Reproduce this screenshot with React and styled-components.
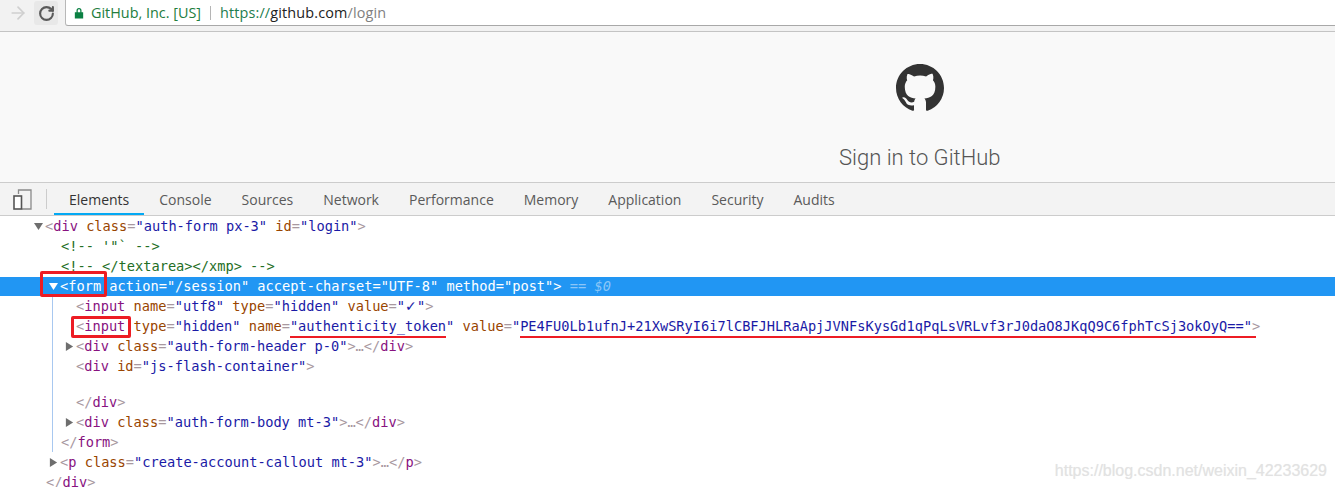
import React from 'react'
import styled, { createGlobalStyle } from 'styled-components'
import { ArrowRight, RotateCw } from 'lucide-react'

const GlobalStyle = createGlobalStyle`
  html, body {
    margin: 0;
    padding: 0;
    background: #fff;
    overflow: hidden;
  }
`

const TABS = ['Elements', 'Console', 'Sources', 'Network', 'Performance', 'Memory', 'Application', 'Security', 'Audits']
const TOKEN = 'PE4FU0Lb1ufnJ+21XwSRyI6i7lCBFJHLRaApjJVNFsKysGd1qPqLsVRLvf3rJ0daO8JKqQ9C6fphTcSj3okOyQ=='

function Attr({ name, value }) {
  return (
    <>
      {' '}
      <AttrName>{name}</AttrName>
      <Punct>=</Punct>
      <Value>"{value}"</Value>
    </>
  )
}

function Arrow({ open, light }) {
  return (
    <Caret $light={light} viewBox="0 0 10 10">
      <path d={open ? 'M0 1h10L5 9z' : 'M1 0v10l8-5z'} />
    </Caret>
  )
}

export default function App() {
  return (
    <Page>
      <GlobalStyle />
      <Toolbar>
        <NavIcon><ArrowRight size={20} strokeWidth={2} color="#cfcfcf" /></NavIcon>
        <ReloadButton><RotateCw size={17} strokeWidth={3} color="#5a5a5a" /></ReloadButton>
        <AddressBar>
          <LockIcon viewBox="0 0 12 14">
            <path d="M3 6V4a3 3 0 016 0v2h2v7.5H1V6zm1.5 0h3V4a1.5 1.5 0 00-3 0z" />
          </LockIcon>
          <SiteName>GitHub, Inc. [US]</SiteName>
          <AddressDivider />
          <Url>
            <Scheme>https://</Scheme>
            <Host>github.com</Host>
            <UrlPath>/login</UrlPath>
          </Url>
        </AddressBar>
      </Toolbar>

      <LoginHeader>
        <Logo viewBox="0 0 16 16">
          <path d="M8 0C3.58 0 0 3.58 0 8c0 3.54 2.29 6.53 5.47 7.59.4.07.55-.17.55-.38 0-.19-.01-.82-.01-1.49-2.01.37-2.53-.49-2.69-.94-.09-.23-.48-.94-.82-1.13-.28-.15-.68-.52-.01-.53.63-.01 1.08.58 1.23.82.72 1.21 1.87.87 2.33.66.07-.52.28-.87.51-1.07-1.78-.2-3.64-.89-3.64-3.95 0-.87.31-1.59.82-2.15-.08-.2-.36-1.02.08-2.12 0 0 .67-.21 2.2.82.64-.18 1.32-.27 2-.27.68 0 1.36.09 2 .27 1.53-1.04 2.2-.82 2.2-.82.44 1.1.16 1.92.08 2.12.51.56.82 1.27.82 2.15 0 3.07-1.87 3.75-3.65 3.95.29.25.54.73.54 1.48 0 1.07-.01 1.93-.01 2.2 0 .21.15.46.55.38A8.013 8.013 0 0016 8c0-4.42-3.58-8-8-8z" />
        </Logo>
        <SignInTitle>Sign in to GitHub</SignInTitle>
      </LoginHeader>

      <TabBar>
        <DeviceIcon viewBox="0 0 19 21">
          <path d="M5.5 5V1h12.5v19H9" fill="none" stroke="#8a8a8a" strokeWidth="1.3" />
          <rect x="1" y="7" width="7.5" height="13" fill="#fff" stroke="#555" strokeWidth="1.6" />
        </DeviceIcon>
        <TabDivider />
        {TABS.map((t, i) => (
          <Tab key={t} $active={i === 0}>{t}</Tab>
        ))}
      </TabBar>

      <Tree>
        <Line $indent={34}>
          <Arrow open />
          <Punct>&lt;</Punct><TagName>div</TagName>
          <Attr name="class" value="auth-form px-3" />
          <Attr name="id" value="login" />
          <Punct>&gt;</Punct>
        </Line>
        <Line $indent={61}><Comment>&lt;!-- '"` --&gt;</Comment></Line>
        <Line $indent={61}><Comment>&lt;!-- &lt;/textarea&gt;&lt;/xmp&gt; --&gt;</Comment></Line>
        <Line $indent={49} $selected>
          <Arrow open light />
          <RedBox $left={40} $top={-5} $width={67} $height={26} />
          <span>&lt;form</span>
          {' action="/session" accept-charset="UTF-8" method="post">'}
          <SelectedHint> == <em>$0</em></SelectedHint>
        </Line>

        <FormChildren>
          <Line $indent={23}>
            <Punct>&lt;</Punct><TagName>input</TagName>
            <Attr name="name" value="utf8" />
            <Attr name="type" value="hidden" />
            {' '}
            <AttrName>value</AttrName>
            <Punct>=</Punct>
            <Value>"<CheckMark>✓</CheckMark>"</Value>
            <Punct>&gt;</Punct>
          </Line>
          <Line $indent={23}>
            <RedBox $left={18} $top={0} $width={60} $height={22} />
            <Punct>&lt;</Punct><TagName>input</TagName>
            <Attr name="type" value="hidden" />
            {' '}
            <AttrName>name</AttrName>
            <Punct>=</Punct>
            <Underlined $extend={0}><Value>"authenticity_token</Value></Underlined>
            <Value>"</Value>
            {' '}
            <AttrName>value</AttrName>
            <Punct>=</Punct>
            <Value>"</Value>
            <Underlined $extend={12}><Value>{TOKEN}</Value></Underlined>
            <Value>"</Value>
            <Punct>&gt;</Punct>
          </Line>
          <Line $indent={12}>
            <Arrow />
            <Punct>&lt;</Punct><TagName>div</TagName>
            <Attr name="class" value="auth-form-header p-0" />
            <Punct>&gt;…&lt;/</Punct><TagName>div</TagName><Punct>&gt;</Punct>
          </Line>
          <Line $indent={23}>
            <Punct>&lt;</Punct><TagName>div</TagName>
            <Attr name="id" value="js-flash-container" />
            <Punct>&gt;</Punct>
          </Line>
          <BlankLine />
          <Line $indent={23}>
            <Punct>&lt;/</Punct><TagName>div</TagName><Punct>&gt;</Punct>
          </Line>
          <Line $indent={12}>
            <Arrow />
            <Punct>&lt;</Punct><TagName>div</TagName>
            <Attr name="class" value="auth-form-body mt-3" />
            <Punct>&gt;…&lt;/</Punct><TagName>div</TagName><Punct>&gt;</Punct>
          </Line>
          <Line $indent={8}>
            <Punct>&lt;/</Punct><TagName>form</TagName><Punct>&gt;</Punct>
          </Line>
        </FormChildren>

        <Line $indent={49}>
          <Arrow />
          <Punct>&lt;</Punct><TagName>p</TagName>
          <Attr name="class" value="create-account-callout mt-3" />
          <Punct>&gt;…&lt;/</Punct><TagName>p</TagName><Punct>&gt;</Punct>
        </Line>
        <Line $indent={46}>
          <Punct>&lt;/</Punct><TagName>div</TagName><Punct>&gt;</Punct>
        </Line>
      </Tree>

      <Watermark>https://blog.csdn.net/weixin_42233629</Watermark>
    </Page>
  )
}

const Page = styled.div`
  position: relative;
  width: 1335px;
  height: 487px;
  overflow: hidden;
  background: #fff;
`

const Toolbar = styled.div`
  height: 32px;
  box-sizing: border-box;
  display: flex;
  align-items: flex-start;
  background: #f2f2f2;
  border-bottom: 1px solid #c4c4c4;
`

const NavIcon = styled.div`
  width: 34px;
  height: 26px;
  display: flex;
  align-items: center;
  justify-content: center;
  padding-left: 2px;
  box-sizing: border-box;
`

const ReloadButton = styled.div`
  width: 24px;
  height: 24px;
  margin-top: 1px;
  border-radius: 3px;
  background: #e8e8e8;
  display: flex;
  align-items: center;
  justify-content: center;
`

const AddressBar = styled.div`
  flex: 1;
  height: 26px;
  margin-left: 7px;
  box-sizing: border-box;
  display: flex;
  align-items: center;
  background: #fff;
  border-left: 1px solid #b8b8b8;
  border-bottom: 1px solid #a8a8a8;
  border-bottom-left-radius: 3px;
  font-family: 'Open Sans', sans-serif;
  font-size: 14.4px;
`

const LockIcon = styled.svg`
  width: 10px;
  height: 12px;
  margin-left: 8px;
  fill: #0b8043;
`

const SiteName = styled.span`
  margin-left: 7px;
  color: #227d3d;
`

const AddressDivider = styled.span`
  width: 1px;
  height: 14px;
  margin: 0 9px 0 9px;
  background: #b5b5b5;
`

const Url = styled.span`
  white-space: pre;
  letter-spacing: 0.15px;
`

const Scheme = styled.span`
  color: #227d4f;
`

const Host = styled.span`
  color: #222;
`

const UrlPath = styled.span`
  color: #808080;
`

const LoginHeader = styled.div`
  height: 150px;
  box-sizing: border-box;
  padding: 32px 0 0 839px;
  background: #f9f9f9;
  display: flex;
  flex-direction: column;
`

const Logo = styled.svg`
  width: 48px;
  height: 48px;
  margin-left: 57px;
  fill: #333;
`

const SignInTitle = styled.h1`
  margin: 31px 0 0;
  font-family: 'Roboto', sans-serif;
  font-weight: 300;
  font-size: 22px;
  line-height: 30px;
  color: #555;
  white-space: nowrap;
`

const TabBar = styled.div`
  height: 34px;
  box-sizing: border-box;
  display: flex;
  align-items: stretch;
  background: #f3f3f3;
  border-top: 1px solid #ccc;
  border-bottom: 1px solid #ccc;
  padding-left: 13px;
`

const DeviceIcon = styled.svg`
  width: 19px;
  height: 21px;
  align-self: center;
`

const TabDivider = styled.span`
  width: 1px;
  height: 20px;
  align-self: center;
  margin: 0 7px 0 14px;
  background: #ccc;
`

const Tab = styled.div`
  padding: 1px 15px 0;
  display: flex;
  align-items: center;
  font-family: 'Open Sans', sans-serif;
  font-size: 14px;
  color: ${(p) => (p.$active ? '#333' : '#5a5a5a')};
  box-shadow: ${(p) => (p.$active ? 'inset 0 -2px 0 #03a9f4' : 'none')};
`

const Tree = styled.div`
  font-family: 'DejaVu Sans Mono', monospace;
  font-size: 13.67px;
  color: #222;
`

const Line = styled.div`
  position: relative;
  height: 20px;
  line-height: 20px;
  white-space: pre;
  padding-left: ${(p) => p.$indent}px;
  background: ${(p) => (p.$selected ? '#2196f3' : 'transparent')};
  box-shadow: ${(p) => (p.$selected ? 'inset 0 1px 0 #fff' : 'none')};
  color: ${(p) => (p.$selected ? '#fff' : 'inherit')};
`

const BlankLine = styled.div`
  height: 16px;
`

const FormChildren = styled.div`
  margin-left: 52px;
  border-left: 1px solid #a8c8f0;
`

const Caret = styled.svg`
  width: 9px;
  height: 9px;
  margin-right: 2px;
  fill: ${(p) => (p.$light ? '#fff' : '#6e6e6e')};
`

const Punct = styled.span`
  color: #a8989f;
`

const TagName = styled.span`
  color: #881280;
`

const AttrName = styled.span`
  color: #994500;
`

const Value = styled.span`
  color: #1a1aa6;
`

const CheckMark = styled.span`
  display: inline-block;
  width: 12px;
  font-family: 'DejaVu Sans', sans-serif;
  font-size: 14px;
  line-height: 1;
`

const Comment = styled.span`
  color: #236e25;
`

const SelectedHint = styled.span`
  color: #8cc6f7;
  em {
    font-style: italic;
  }
`

const Underlined = styled.span`
  position: relative;
  &::after {
    content: '';
    position: absolute;
    left: 0;
    right: ${(p) => -p.$extend}px;
    bottom: -4px;
    height: 2px;
    background: #ed1c24;
  }
`

const RedBox = styled.span`
  position: absolute;
  top: ${(p) => p.$top}px;
  left: ${(p) => p.$left}px;
  width: ${(p) => p.$width}px;
  height: ${(p) => p.$height}px;
  border: 3px solid #ed1c24;
  border-radius: 2px;
  box-sizing: border-box;
`

const Watermark = styled.div`
  position: absolute;
  right: 8px;
  bottom: 7px;
  font-family: 'Liberation Sans', sans-serif;
  font-size: 16px;
  color: #e2e2e2;
  text-shadow: 0 0 1px #eee;
`
